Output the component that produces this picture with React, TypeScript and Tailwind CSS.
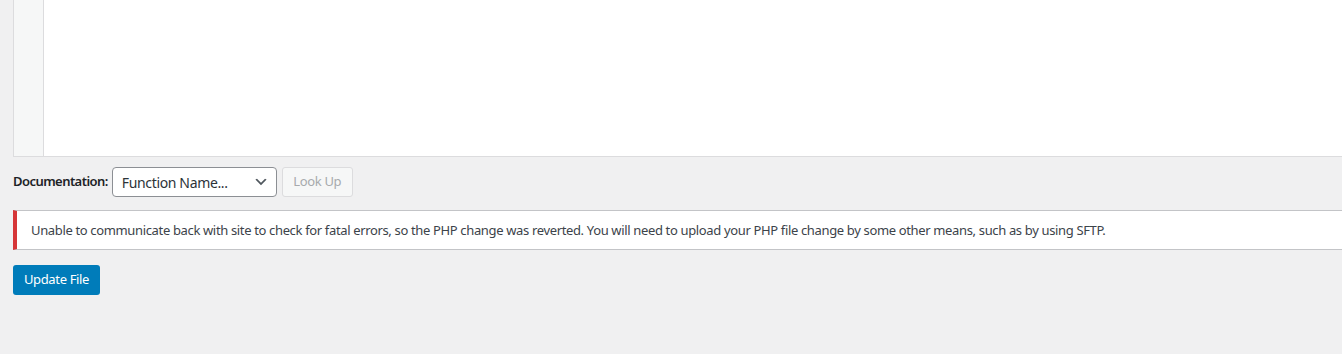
import React from "react";

const font = { fontFamily: '"Noto Sans", "Open Sans", Roboto, sans-serif' };

function Chevron() {
  return (
    <svg width="16" height="16" viewBox="0 0 20 20" className="text-[#50575e]" aria-hidden>
      <path d="M5 6l5 5 5-5 2 1-7 7-7-7z" fill="currentColor" />
    </svg>
  );
}

export default function App() {
  return (
    <div
      className="min-h-[354px] w-full overflow-hidden bg-[#f0f0f1] pl-[13px] text-[13px] tracking-[-0.35px] text-[#3c434a]"
      style={font}
    >
      {/* code editor (top cut off) */}
      <div className="flex h-[157px] border-b border-l border-[#dcdcde]">
        <div className="w-[30px] shrink-0 border-r border-[#dcdcde] bg-[#f6f7f7]" />
        <div className="flex-1 bg-white" />
      </div>

      <div className="mt-[10px] flex items-center">
        <label className="mr-[4px] font-semibold tracking-[-0.55px] text-[#1d2327]">Documentation:</label>
        <div className="flex h-[30px] w-[165px] items-center justify-between rounded-[4px] border border-[#8c8f94] bg-white pl-[9px] pr-[7px] text-[14px] text-[#2c3338]">
          <span>Function Name...</span>
          <Chevron />
        </div>
        <button
          disabled
          className="ml-[5px] h-[30px] w-[71px] rounded-[3px] border border-[#dcdcde] bg-[#f6f7f7] text-[13px] text-[#a7aaad]"
        >
          Look Up
        </button>
      </div>

      <div className="mt-[13px] border-y border-l-4 border-[#c3c4c7] border-l-[#d63638] bg-white pl-[14px]">
        <p className="whitespace-nowrap py-[9px] leading-[20px]">
          Unable to communicate back with site to check for fatal errors, so the PHP change was reverted. You will need to
          upload your PHP file change by some other means, such as by using SFTP.
        </p>
      </div>

      <button className="mt-[15px] h-[30px] w-[87px] rounded-[3px] bg-[#007cba] text-[13px] text-white">
        Update File
      </button>
    </div>
  );
}
